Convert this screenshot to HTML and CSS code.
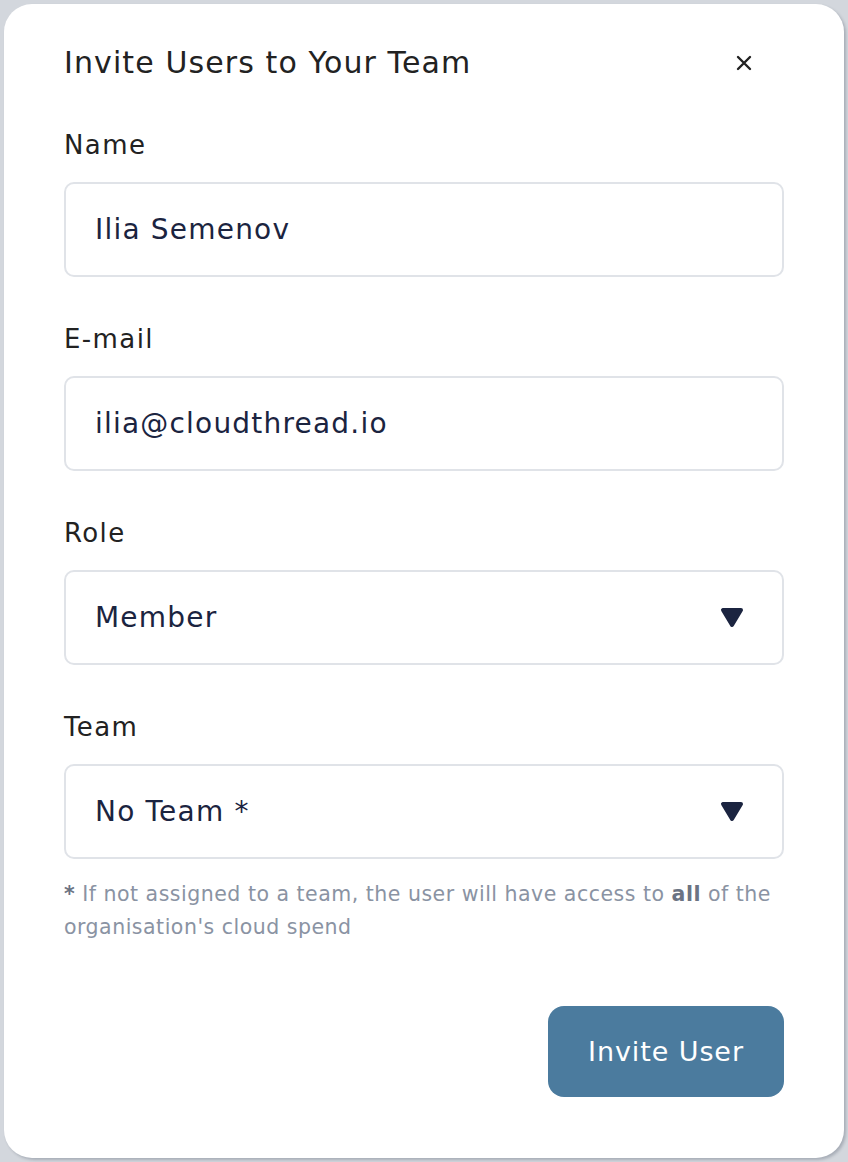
FILE: index.html
```html
<!DOCTYPE html>
<html lang="en">
<head>
<meta charset="utf-8">
<title>Invite Users</title>
<link rel="stylesheet" href="styles.css">
</head>
<body>
<div class="modal">
  <div class="modal-head">
    <h1 class="title">Invite Users to Your Team</h1>
    <button class="close" aria-label="Close">
      <svg width="16" height="16" viewBox="0 0 16 16"><path d="M2 2L14 14M14 2L2 14" stroke="#222" stroke-width="2.4" stroke-linecap="round"/></svg>
    </button>
  </div>
  <div class="field">
    <label class="label">Name</label>
    <div class="input">Ilia Semenov</div>
  </div>
  <div class="field">
    <label class="label">E-mail</label>
    <div class="input">ilia@cloudthread.io</div>
  </div>
  <div class="field">
    <label class="label">Role</label>
    <div class="input select">Member
      <svg class="caret" width="24" height="21" viewBox="0 0 24 21"><path d="M3 3H21L12 18Z" fill="#1b2440" stroke="#1b2440" stroke-width="4" stroke-linejoin="round"/></svg>
    </div>
  </div>
  <div class="field field-last">
    <label class="label">Team</label>
    <div class="input select">No Team *
      <svg class="caret" width="24" height="21" viewBox="0 0 24 21"><path d="M3 3H21L12 18Z" fill="#1b2440" stroke="#1b2440" stroke-width="4" stroke-linejoin="round"/></svg>
    </div>
  </div>
  <p class="note"><b>*</b> If not assigned to a team, the user will have access to <b>all</b> of the organisation's cloud spend</p>
  <div class="actions">
    <button class="primary">Invite User</button>
  </div>
</div>
</body>
</html>
```
FILE: styles.css
```css
* { box-sizing: border-box; }
html, body { margin: 0; padding: 0; }
body {
  background: #d3d7dd;
  font-family: "DejaVu Sans", "Noto Sans", sans-serif;
  width: 848px;
  height: 1162px;
  padding: 4px;
}
.modal {
  width: 840px;
  height: 1154px;
  background: #fff;
  border-radius: 28px;
  box-shadow: 2px 2px 3px rgba(40, 50, 70, 0.25);
  padding: 39px 60px 0 60px;
  display: flex;
  flex-direction: column;
}
.modal-head {
  display: flex;
  align-items: center;
  justify-content: space-between;
  height: 40px;
  margin-bottom: 47px;
}
.title {
  margin: 0;
  font-size: 30px;
  font-weight: 400;
  letter-spacing: 1.1px;
  color: #222;
  line-height: 42px;
}
.close {
  border: 0;
  background: none;
  padding: 0;
  width: 16px;
  height: 16px;
  margin-right: 32px;
  display: flex;
}
.field {
  display: flex;
  flex-direction: column;
  gap: 22px;
  margin-bottom: 47px;
}
.field-last { margin-bottom: 19px; }
.label {
  font-size: 26px;
  line-height: 30px;
  letter-spacing: 1.4px;
  color: #222;
}
.input {
  height: 95px;
  border: 2px solid #e0e3e8;
  border-radius: 10px;
  padding: 0 30px 0 29px;
  display: flex;
  align-items: center;
  font-size: 28px;
  letter-spacing: 1.2px;
  color: #1b2440;
}
.select { justify-content: space-between; padding-right: 38px; }
.caret { display: block; }
.note {
  margin: 0;
  font-size: 20.5px;
  line-height: 33px;
  letter-spacing: 0.5px;
  color: #8a93a3;
}
.note b { color: #6b7383; }
.actions {
  display: flex;
  justify-content: flex-end;
  margin-top: 62px;
}
.primary {
  width: 236px;
  height: 91px;
  border: 0;
  border-radius: 16px;
  background: #4b7b9e;
  color: #fff;
  font-family: inherit;
  font-size: 27px;
  letter-spacing: 0.9px;
}
```
